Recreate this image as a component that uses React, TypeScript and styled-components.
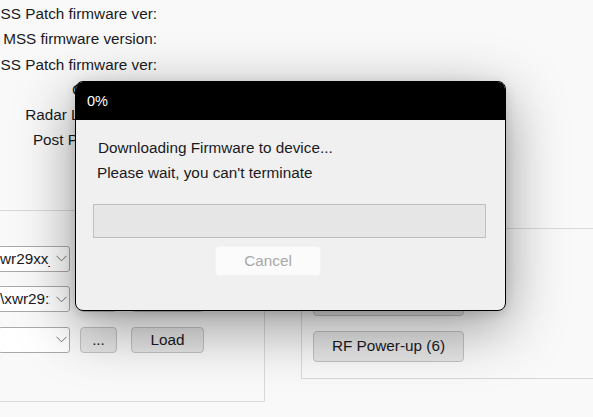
import styled, { createGlobalStyle } from 'styled-components';

const textColor = '#1a1a1f';
const boxLine = '#d8d8d8';
const uiFont = '15.3px';

const GlobalStyle = createGlobalStyle`
  html, body {
    margin: 0;
    padding: 0;
    background: #f9f9f9;
  }
  body {
    font-family: "Liberation Sans", Arial, sans-serif;
    font-size: ${uiFont};
    color: ${textColor};
  }
`;

const Screen = styled.div`
  position: relative;
  width: 593px;
  height: 417px;
  overflow: hidden;
  background: #f9f9f9;
`;

const InfoList = styled.ul`
  list-style: none;
  margin: 0 0 0 -60px;
  padding: 1px 0 0 0;
  width: 217px;
`;

const InfoLabel = styled.li`
  height: 25.3px;
  line-height: 25px;
  text-align: right;
  white-space: nowrap;
`;

const Groups = styled.div`
  display: flex;
  align-items: flex-start;
  margin-top: 57px;
  width: 700px;
`;

const LeftGroup = styled.section`
  box-sizing: border-box;
  width: 265px;
  height: 192px;
  border: 1px solid ${boxLine};
  border-left: none;
  padding-top: 35px;
  display: flex;
  flex-direction: column;
  gap: 14.5px;
`;

const RightGroup = styled.section`
  box-sizing: border-box;
  margin-left: 36px;
  margin-top: 18px;
  flex: 1;
  height: 151px;
  border: 1px solid ${boxLine};
  border-right: none;
  padding: 10px 0 0 11px;
  display: flex;
  flex-direction: column;
  gap: 15px;
`;

const FileRow = styled.div`
  display: flex;
  align-items: center;
`;

const Combo = styled.div`
  box-sizing: border-box;
  width: 72px;
  height: 26px;
  margin-left: -2px;
  background: #fff;
  border: 1px solid #a9a9a9;
  border-radius: 3px;
  display: flex;
  align-items: center;
  padding-left: 1px;
`;

const ComboText = styled.span`
  width: 50px;
  overflow: hidden;
  white-space: nowrap;
  line-height: 24px;
`;

const Chevron = () => (
  <svg width="11" height="7" viewBox="0 0 11 7" style={{ marginLeft: 6 }}>
    <polyline points="0.5,0.8 5.5,5.8 10.5,0.8" fill="none" stroke="#707070" strokeWidth="1" />
  </svg>
);

const Button = styled.button<{ $w: number; $h?: number; $gap?: number }>`
  box-sizing: border-box;
  width: ${(p) => p.$w}px;
  height: ${(p) => p.$h ?? 26}px;
  margin-left: ${(p) => p.$gap ?? 0}px;
  padding: 0;
  font-family: inherit;
  font-size: ${uiFont};
  color: ${textColor};
  background: #e6e6e6;
  border: 1px solid #c2c2c2;
  border-radius: 4px;
`;

const Overlay = styled.div`
  position: absolute;
  left: 75px;
  top: 81px;
`;

const Dialog = styled.div`
  box-sizing: border-box;
  width: 431px;
  height: 230px;
  border: 1px solid #000;
  border-radius: 8px;
  overflow: hidden;
  background: #f0f0f0;
  box-shadow: 0 16px 60px rgba(0, 0, 0, 0.4), 0 3px 12px rgba(0, 0, 0, 0.14);
  display: flex;
  flex-direction: column;
`;

const TitleBar = styled.div`
  height: 38px;
  background: #000;
  color: #fff;
  padding-left: 11px;
  line-height: 38px;
  font-size: 14.5px;
`;

const Body = styled.div`
  padding: 15px 19px 0 17px;
  display: flex;
  flex-direction: column;
`;

const Message = styled.p<{ $indent: number }>`
  margin: 0;
  padding-left: ${(p) => p.$indent}px;
  line-height: 25px;
  color: ${textColor};
`;

const ProgressTrack = styled.div`
  box-sizing: border-box;
  height: 34px;
  margin-top: 19px;
  background: #e6e6e6;
  border: 1px solid #bfbfbf;
`;

const CancelButton = styled.button`
  box-sizing: border-box;
  width: 106px;
  height: 30px;
  margin: 8px 0 0 122px;
  padding: 0;
  font-family: inherit;
  font-size: ${uiFont};
  color: #a8a8a8;
  background: #fbfbfb;
  border: 1px solid #f3f3f3;
  border-radius: 4px;
`;

const infoLabels = [
  'MSS Patch firmware ver:',
  'MSS firmware version:',
  'MSS Patch firmware ver:',
  'CRC Status:',
  'Radar Link version:',
  'Post Proc version:',
];

const fileRows = [
  { text: 'wr29xx_mss.bin', load: 'Load' },
  { text: '\\xwr29:xx_bss.bin', load: 'Load' },
  { text: '', load: 'Load' },
];

const powerButtons = ['SPI Connect (4)', 'Reset (5)', 'RF Power-up (6)'];

function App() {
  return (
    <>
      <GlobalStyle />
      <Screen>
        <InfoList>
          {infoLabels.map((label, i) => (
            <InfoLabel key={i}>{label}</InfoLabel>
          ))}
        </InfoList>
        <Groups>
          <LeftGroup>
            {fileRows.map((row, i) => (
              <FileRow key={i}>
                <Combo>
                  <ComboText>{row.text}</ComboText>
                  <Chevron />
                </Combo>
                <Button $w={37} $gap={10}>...</Button>
                <Button $w={73} $gap={14}>{row.load}</Button>
              </FileRow>
            ))}
          </LeftGroup>
          <RightGroup>
            {powerButtons.map((label) => (
              <Button key={label} $w={151} $h={31}>
                {label}
              </Button>
            ))}
          </RightGroup>
        </Groups>
        <Overlay>
          <Dialog>
            <TitleBar>0%</TitleBar>
            <Body>
              <Message $indent={5}>Downloading Firmware to device...</Message>
              <Message $indent={4}>Please wait, you can't terminate</Message>
              <ProgressTrack />
              <CancelButton disabled>Cancel</CancelButton>
            </Body>
          </Dialog>
        </Overlay>
      </Screen>
    </>
  );
}

export default App;
